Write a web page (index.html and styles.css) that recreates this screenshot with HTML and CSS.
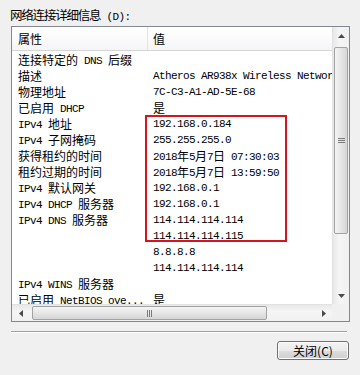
FILE: index.html
```html
<!DOCTYPE html>
<html lang="zh-CN">
<head>
<meta charset="utf-8">
<title>网络连接详细信息</title>
<link rel="stylesheet" href="styles.css">
</head>
<body>
<div class="dialog">
  <div class="title"><span class="c">网络连接详细信息</span> <span class="m">(D):</span></div>
  <div class="box">
    <div class="list">
      <div class="header">
        <div class="hc1">属性</div>
        <div class="hc2">值</div>
      </div>
      <div class="rows">
        <div class="row"><div class="k"><span class="c">连接特定的</span> DNS <span class="c">后缀</span></div><div class="v"></div></div>
        <div class="row"><div class="k"><span class="c">描述</span></div><div class="v">Atheros AR938x Wireless Network Adapter</div></div>
        <div class="row"><div class="k"><span class="c">物理地址</span></div><div class="v">7C-C3-A1-AD-5E-68</div></div>
        <div class="row"><div class="k"><span class="c">已启用</span> DHCP</div><div class="v"><span class="c">是</span></div></div>
        <div class="row"><div class="k">IPv4 <span class="c">地址</span></div><div class="v">192.168.0.184</div></div>
        <div class="row"><div class="k">IPv4 <span class="c">子网掩码</span></div><div class="v">255.255.255.0</div></div>
        <div class="row"><div class="k"><span class="c">获得租约的时间</span></div><div class="v">2018<span class="c">年</span>5<span class="c">月</span>7<span class="c">日</span> 07:30:03</div></div>
        <div class="row"><div class="k"><span class="c">租约过期的时间</span></div><div class="v">2018<span class="c">年</span>5<span class="c">月</span>7<span class="c">日</span> 13:59:50</div></div>
        <div class="row"><div class="k">IPv4 <span class="c">默认网关</span></div><div class="v">192.168.0.1</div></div>
        <div class="row"><div class="k">IPv4 DHCP <span class="c">服务器</span></div><div class="v">192.168.0.1</div></div>
        <div class="row"><div class="k">IPv4 DNS <span class="c">服务器</span></div><div class="v">114.114.114.114</div></div>
        <div class="row"><div class="k"></div><div class="v">114.114.114.115</div></div>
        <div class="row"><div class="k"></div><div class="v">8.8.8.8</div></div>
        <div class="row"><div class="k"></div><div class="v">114.114.114.114</div></div>
        <div class="row"><div class="k">IPv4 WINS <span class="c">服务器</span></div><div class="v"></div></div>
        <div class="row"><div class="k"><span class="c">已启用</span> NetBIOS ove...</div><div class="v"><span class="c">是</span></div></div>
      </div>
      <div class="highlight"></div>
    </div>
    <div class="vscroll">
      <div class="sbtn">
        <svg width="7" height="4" viewBox="0 0 7 4"><path d="M0 4 L3.5 0 L7 4 Z" fill="#4a4a4a"/></svg>
      </div>
      <div class="vtrack">
        <div class="vthumb">
          <svg width="7" height="7" viewBox="0 0 7 7"><path d="M0 1.5 H7 M0 3.5 H7 M0 5.5 H7" stroke="#7a7a7a" stroke-width="1"/></svg>
        </div>
      </div>
      <div class="sbtn">
        <svg width="7" height="4" viewBox="0 0 7 4"><path d="M0 0 L3.5 4 L7 0 Z" fill="#4a4a4a"/></svg>
      </div>
    </div>
    <div class="hscroll">
      <div class="sbtn">
        <svg width="4" height="7" viewBox="0 0 4 7"><path d="M4 0 L0 3.5 L4 7 Z" fill="#4a4a4a"/></svg>
      </div>
      <div class="htrack">
        <div class="hthumb">
          <svg width="7" height="7" viewBox="0 0 7 7"><path d="M1.5 0 V7 M3.5 0 V7 M5.5 0 V7" stroke="#7a7a7a" stroke-width="1"/></svg>
        </div>
      </div>
      <div class="sbtn">
        <svg width="4" height="7" viewBox="0 0 4 7"><path d="M0 0 L4 3.5 L0 7 Z" fill="#4a4a4a"/></svg>
      </div>
    </div>
    <div class="corner"></div>
  </div>
  <div class="sep"></div>
  <div class="actions">
    <button class="btn" type="button">关闭(C)</button>
  </div>
</div>
</body>
</html>
```
FILE: styles.css
```css
html, body {
  margin: 0;
  padding: 0;
  background: #f0f0f0;
}
body {
  width: 360px;
  height: 375px;
  overflow: hidden;
  color: #000;
  font-family: "Liberation Mono", "Noto Sans CJK SC", monospace;
  font-size: 11px;
  letter-spacing: -0.6px;
}
.c {
  font-family: "Noto Sans CJK SC", sans-serif;
  font-size: 12px;
  letter-spacing: 0;
  vertical-align: -1px;
}
.m {
  font-family: "Liberation Mono", monospace;
  font-size: 11px;
  letter-spacing: -0.6px;
}
.dialog {
  display: flex;
  flex-direction: column;
}
.title {
  height: 18px;
  padding: 7px 0 0 10px;
  line-height: 16px;
  white-space: nowrap;
}
.title .c {
  letter-spacing: -1.2px;
  font-size: 12.5px;
  vertical-align: 0;
}
.box {
  margin-left: 11px;
  margin-top: 1px;
  width: 337px;
  height: 294px;
  border: 1px solid #828790;
  display: grid;
  grid-template-columns: 320px 17px;
  grid-template-rows: 277px 17px;
  background: #fff;
}
.list {
  position: relative;
  overflow: hidden;
  background: #fff;
}
.header {
  display: flex;
  height: 23px;
  border-bottom: 1px solid #d5d5d5;
  background: linear-gradient(#ffffff, #fbfbfc 50%, #f4f5f7);
  line-height: 23px;
}
.hc1, .hc2 {
  font-family: "Noto Sans CJK SC", sans-serif;
  font-size: 12px;
  letter-spacing: 0;
}
.hc1 {
  width: 129px;
  padding-left: 6px;
  border-right: 1px solid #e3e4e6;
}
.hc2 {
  padding-left: 5px;
}
.rows {
  padding-top: 1px;
}
.row {
  display: flex;
  height: 16px;
  line-height: 16px;
  white-space: nowrap;
}
.k {
  width: 129px;
  padding-left: 6px;
  flex: none;
  overflow: visible;
}
.v {
  padding-left: 6px;
  flex: none;
}
.highlight {
  position: absolute;
  left: 133px;
  top: 88px;
  width: 142px;
  height: 127px;
  box-sizing: border-box;
  border: 2px solid #d6141e;
}
.vscroll {
  display: flex;
  flex-direction: column;
  background: linear-gradient(90deg, #e8e8e8, #f5f5f5 40%, #f0f0f0);
  border-left: 1px solid #e2e2e2;
  width: 16px;
}
.sbtn {
  flex: none;
  width: 16px;
  height: 17px;
  display: flex;
  align-items: center;
  justify-content: center;
}
.vtrack {
  flex: 1;
  padding-top: 3px;
  display: flex;
  flex-direction: column;
  align-items: center;
}
.vthumb {
  width: 12px;
  height: 185px;
  border: 1px solid #a2a2a2;
  border-radius: 2px;
  background: linear-gradient(90deg, #f4f4f4, #e6e6e6 50%, #d6d6d6);
  display: flex;
  align-items: center;
  justify-content: center;
}
.hscroll {
  display: flex;
  align-items: stretch;
  background: linear-gradient(#e8e8e8, #f5f5f5 40%, #f0f0f0);
  border-top: 1px solid #e2e2e2;
  height: 16px;
}
.hscroll .sbtn {
  width: 17px;
  height: 16px;
}
.htrack {
  flex: 1;
  padding-left: 3px;
  display: flex;
  align-items: center;
}
.hthumb {
  width: 233px;
  height: 12px;
  border: 1px solid #a2a2a2;
  border-radius: 2px;
  background: linear-gradient(#f4f4f4, #e6e6e6 50%, #d6d6d6);
  display: flex;
  align-items: center;
  justify-content: center;
}
.corner {
  background: #f0f0f0;
}
.sep {
  margin: 9px 13px 0 11px;
  height: 1px;
  background: #a0a0a0;
  border-bottom: 1px solid #ffffff;
}
.actions {
  display: flex;
  justify-content: flex-end;
  padding: 8px 11px 0 0;
}
.btn {
  width: 72px;
  height: 19px;
  margin: 0;
  padding: 0;
  border: 1px solid #707070;
  border-radius: 3px;
  background: linear-gradient(#f2f2f2, #ebebeb 50%, #dddddd 51%, #cfcfcf);
  box-shadow: inset 0 0 0 1px #fcfcfc;
  font-family: "Noto Sans CJK SC", sans-serif;
  font-size: 12px;
  line-height: 17px;
  color: #000;
  letter-spacing: 0;
}
```
